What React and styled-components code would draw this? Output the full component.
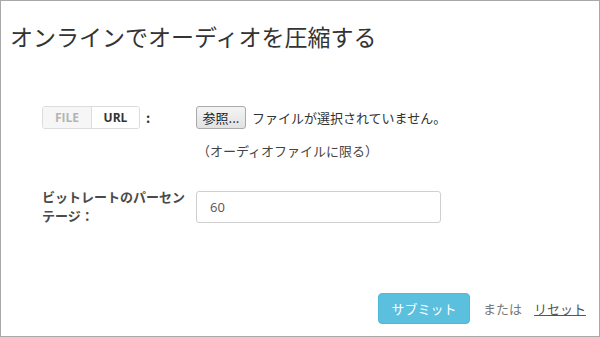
import React from "react";
import styled, { createGlobalStyle } from "styled-components";

const GlobalStyle = createGlobalStyle`
  html, body {
    margin: 0;
    padding: 0;
    background: #fff;
  }
  body {
    font-family: "Open Sans", "Noto Sans CJK JP", sans-serif;
    color: #333;
  }
`;

const Card = styled.div`
  box-sizing: border-box;
  width: 600px;
  height: 337px;
  border: 1px solid #a8a8a8;
  display: flex;
  flex-direction: column;
`;

const Title = styled.h1`
  margin: 0;
  padding: 19px 0 0 9px;
  font-family: "Noto Sans CJK JP", sans-serif;
  font-size: 23px;
  font-weight: 400;
  line-height: 33px;
  color: #333;
`;

const Form = styled.div`
  display: grid;
  grid-template-columns: 154px 1fr;
  row-gap: 26px;
  padding-left: 41px;
  margin-top: 53px;
  font-family: "Noto Sans CJK JP", sans-serif;
  font-size: 13px;
`;

const LabelCell = styled.div`
  display: flex;
  align-items: ${(p) => (p.$top ? "flex-start" : "center")};
  align-self: start;
  height: ${(p) => (p.$top ? "auto" : "23px")};
`;

const Toggle = styled.div`
  display: flex;
  height: 23px;
  border: 1px solid #dcdcdc;
  border-radius: 3px;
  box-sizing: border-box;
  overflow: hidden;
`;

const Segment = styled.div`
  width: ${(p) => p.$w}px;
  display: flex;
  align-items: center;
  justify-content: center;
  font-family: "Open Sans", sans-serif;
  font-weight: 700;
  font-size: 12px;
  color: ${(p) => (p.$active ? "#333" : "#b4b4b4")};
  background: ${(p) => (p.$active ? "#fff" : "#f6f6f6")};
  & + & {
    border-left: 1px solid #dcdcdc;
  }
`;

const Colon = styled.span`
  margin-left: 6px;
  font-weight: 700;
  color: #333;
`;

const FieldCell = styled.div`
  display: flex;
  flex-direction: column;
`;

const FileRow = styled.div`
  display: flex;
  align-items: center;
  height: 23px;
`;

const BrowseButton = styled.button`
  box-sizing: border-box;
  height: 23px;
  width: 50px;
  padding: 0;
  border: 1px solid #a9a9a9;
  border-radius: 3px;
  background: linear-gradient(#f4f4f4, #e2e2e2);
  font-family: "Noto Sans CJK JP", sans-serif;
  font-size: 13px;
  color: #222;
`;

const FileName = styled.span`
  margin-left: 6px;
  color: #333;
`;

const Hint = styled.div`
  margin-top: 12px;
  margin-left: 1px;
  line-height: 20px;
  color: #444;
`;

const Label = styled.div`
  font-weight: 700;
  line-height: 19px;
  color: #4a4a4a;
`;

const TextInput = styled.input`
  box-sizing: border-box;
  width: 245px;
  height: 32px;
  margin-top: 4px;
  padding: 0 13px;
  border: 1px solid #cfcfcf;
  border-radius: 3px;
  font-family: "Open Sans", sans-serif;
  font-size: 13px;
  color: #555;
  outline: none;
`;

const Footer = styled.div`
  margin-top: auto;
  display: flex;
  align-items: center;
  justify-content: flex-end;
  padding: 0 13px 12px 0;
  font-family: "Noto Sans CJK JP", sans-serif;
  font-size: 13px;
`;

const Submit = styled.button`
  box-sizing: border-box;
  width: 92px;
  height: 31px;
  border: 1px solid #4fbbdb;
  border-radius: 4px;
  background: #5bc0de;
  color: #fff;
  font-family: "Noto Sans CJK JP", sans-serif;
  font-size: 13px;
`;

const Or = styled.span`
  margin-left: 13px;
  color: #777;
`;

const Reset = styled.a`
  margin-left: 12px;
  color: #555;
  text-decoration: underline;
`;

export default function App() {
  return (
    <>
      <GlobalStyle />
      <Card>
        <Title>オンラインでオーディオを圧縮する</Title>
        <Form>
          <LabelCell>
            <Toggle>
              <Segment $w={48}>FILE</Segment>
              <Segment $w={47} $active>URL</Segment>
            </Toggle>
            <Colon>:</Colon>
          </LabelCell>
          <FieldCell>
            <FileRow>
              <BrowseButton>参照...</BrowseButton>
              <FileName>ファイルが選択されていません。</FileName>
            </FileRow>
            <Hint>（オーディオファイルに限る）</Hint>
          </FieldCell>
          <LabelCell $top>
            <Label>ビットレートのパーセンテージ：</Label>
          </LabelCell>
          <FieldCell>
            <TextInput defaultValue="60" />
          </FieldCell>
        </Form>
        <Footer>
          <Submit>サブミット</Submit>
          <Or>または</Or>
          <Reset>リセット</Reset>
        </Footer>
      </Card>
    </>
  );
}
